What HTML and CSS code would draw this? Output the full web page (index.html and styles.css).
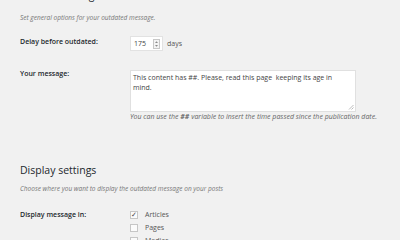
FILE: index.html
```html
<!DOCTYPE html>
<html lang="en">

<head>
    <meta charset="UTF-8">
    <meta name="viewport" content="width=device-width, initial-scale=1.0">
    <link rel="stylesheet" href="styles.css">
    <title>Outdated message settings</title>
</head>

<body>
    <div class="wrap">

        <h2 class="section-title first">General settings</h2>
        <p class="description">Set general options for your outdated message.</p>

        <div class="form-row row-delay">
            <div class="label">Delay before outdated:</div>
            <div class="field">
                <div class="number-box">
                    <span class="number-value">175</span>
                    <span class="spinner">
                        <svg width="7" height="10" viewBox="0 0 7 10">
                            <rect x="0.5" y="0.5" width="6" height="9" fill="#f4f4f4" stroke="#c8c8c8" />
                            <path d="M2 4 L3.5 2.2 L5 4 Z" fill="#888" />
                            <path d="M2 6 L3.5 7.8 L5 6 Z" fill="#888" />
                        </svg>
                    </span>
                </div>
                <span class="unit">days</span>
            </div>
        </div>

        <div class="form-row row-message">
            <div class="label">Your message:</div>
            <div class="field">
                <div class="textarea">
                    This content has ##. Please, read this page&nbsp; keeping its age in mind.
                    <svg class="grip" width="6" height="6" viewBox="0 0 6 6">
                        <path d="M5.5 1 L1 5.5 M5.5 3.5 L3.5 5.5" stroke="#aaa" stroke-width="0.8" />
                    </svg>
                </div>
                <p class="hint">You can use the <b>##</b> variable to insert the time passed since the publication date.</p>
            </div>
        </div>

        <h2 class="section-title second">Display settings</h2>
        <p class="description">Choose where you want to display the outdated message on your posts</p>

        <div class="form-row row-display">
            <div class="label">Display message in:</div>
            <div class="field checks">
                <label class="check"><span class="box checked">&#10003;</span>Articles</label>
                <label class="check"><span class="box"></span>Pages</label>
                <label class="check"><span class="box"></span>Medias</label>
            </div>
        </div>

    </div>
</body>

</html>
```

FILE: styles.css
```css
html {
    box-sizing: border-box;
}

*,
*::before,
*::after {
    margin: 0;
    padding: 0;
    box-sizing: inherit;
}

body {
    background-color: #f1f1f1;
    font-family: "Open Sans", "Liberation Sans", sans-serif;
    color: #23282d;
    overflow: hidden;
}

.wrap {
    padding-left: 20px;
}

.section-title {
    font-size: 10.5px;
    font-weight: 400;
    color: #23282d;
    line-height: 14px;
}

.section-title.first {
    margin-top: -12px;
}

.section-title.first + .description {
    margin-top: 11px;
}

.section-title.second {
    margin-top: 41px;
}

.description {
    font-size: 6.5px;
    font-style: italic;
    color: #777;
    line-height: 10px;
    margin-top: 7px;
}

.form-row {
    display: flex;
}

.label {
    width: 110px;
    font-size: 7px;
    font-weight: 600;
    line-height: 10px;
}

.field {
    font-size: 7px;
    line-height: 10px;
}

.row-delay {
    margin-top: 13px;
}

.row-delay .label {
    padding-top: 1px;
}

.row-delay .field {
    display: flex;
    align-items: center;
    gap: 4px;
}

.number-box {
    width: 33px;
    height: 15px;
    background-color: #fff;
    border: 1px solid #e2e2e2;
    display: flex;
    align-items: center;
    padding-left: 3px;
    padding-right: 2px;
    justify-content: space-between;
    color: #444;
}

.spinner {
    display: flex;
}

.unit {
    color: #555;
}

.row-message {
    margin-top: 17px;
}

.row-message .label {
    padding-top: 1px;
}

.row-message .field {
    padding-top: 2px;
}

.textarea {
    position: relative;
    width: 226px;
    height: 42px;
    background-color: #fff;
    border: 1px solid #e0e0e0;
    padding: 2px 20px 0 2px;
    color: #444;
    line-height: 10px;
}

.grip {
    position: absolute;
    right: 1px;
    bottom: 1px;
}

.hint {
    font-size: 7px;
    font-style: italic;
    color: #666;
    line-height: 10px;
}

.row-display {
    margin-top: 15px;
}

.row-display .label {
    padding-top: 1px;
}

.checks {
    display: flex;
    flex-direction: column;
    gap: 3px;
    padding-top: 1px;
}

.check {
    display: flex;
    align-items: center;
    gap: 7px;
    color: #555;
    height: 10px;
}

.box {
    width: 8px;
    height: 8px;
    border: 1px solid #c6c6c6;
    background-color: #fbfbfb;
    font-size: 7px;
    line-height: 6px;
    text-align: center;
    color: #444;
}
```
